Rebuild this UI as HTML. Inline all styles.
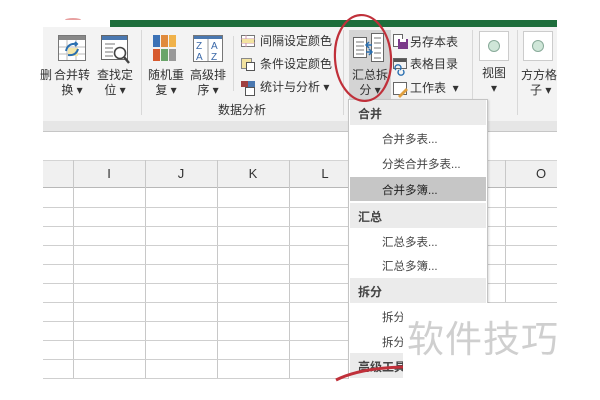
<!DOCTYPE html>
<html><head><meta charset="utf-8"><style>
*{margin:0;padding:0;box-sizing:border-box}
body{width:600px;height:400px;background:#fff;position:relative;overflow:hidden;font-family:"Liberation Sans","Noto Sans CJK SC",sans-serif;color:#333}
.a{position:absolute}
.t{position:absolute;font-size:12px;line-height:14px;white-space:nowrap;color:#333}
.c{text-align:center}
.vl{position:absolute;width:1px;background:#c8c8c8}
.hl{position:absolute;height:1px;background:#cfcfcf}
.mi{position:absolute;left:382px;font-size:11.5px;color:#444}
.mh{position:absolute;left:350px;width:136px;height:25px;background:#ebebeb;font-size:12px;font-weight:bold;color:#444;padding:5px 0 0 8px}
</style></head><body>
<div class="a" style="left:43px;top:20px;width:514px;height:101px;background:#f3f3f3"></div>
<div class="a" style="left:43px;top:20px;width:67px;height:7px;background:#fff"></div>
<div class="a" style="left:110px;top:20px;width:447px;height:7px;background:#1e6e3c"></div>
<div class="a" style="left:65px;top:18px;width:16px;height:4px;border-top:2px solid #e8a0a0;border-radius:50%"></div>
<div class="a" style="left:43px;top:121px;width:514px;height:11px;background:#e6e6e6;border-bottom:1px solid #c6c6c6"></div>
<div class="a" style="left:43px;top:132px;width:514px;height:28px;background:#fff"></div>
<div class="a" style="left:43px;top:160px;width:514px;height:28px;background:#f0f0f0;border-top:1px solid #d4d4d4;border-bottom:1px solid #b8b8b8"></div>
<div class="t c" style="left:73px;top:167px;width:72px;font-size:13px">I</div>
<div class="t c" style="left:145px;top:167px;width:72px;font-size:13px">J</div>
<div class="t c" style="left:217px;top:167px;width:72px;font-size:13px">K</div>
<div class="t c" style="left:289px;top:167px;width:72px;font-size:13px">L</div>
<div class="t c" style="left:505px;top:167px;width:72px;font-size:13px">O</div>
<div class="vl" style="left:73px;top:160px;height:219px"></div>
<div class="vl" style="left:145px;top:160px;height:219px"></div>
<div class="vl" style="left:217px;top:160px;height:219px"></div>
<div class="vl" style="left:289px;top:160px;height:219px"></div>
<div class="vl" style="left:361px;top:160px;height:219px"></div>
<div class="vl" style="left:433px;top:160px;height:219px"></div>
<div class="vl" style="left:505px;top:160px;height:219px"></div>
<div class="hl" style="left:43px;top:207px;width:514px"></div>
<div class="hl" style="left:43px;top:226px;width:514px"></div>
<div class="hl" style="left:43px;top:245px;width:514px"></div>
<div class="hl" style="left:43px;top:264px;width:514px"></div>
<div class="hl" style="left:43px;top:283px;width:514px"></div>
<div class="hl" style="left:43px;top:302px;width:514px"></div>
<div class="hl" style="left:43px;top:321px;width:514px"></div>
<div class="hl" style="left:43px;top:340px;width:514px"></div>
<div class="hl" style="left:43px;top:359px;width:514px"></div>
<div class="hl" style="left:43px;top:378px;width:514px"></div>
<div class="a" style="left:0;top:379px;width:600px;height:21px;background:#fff"></div>

<div class="t" style="left:40px;top:68px">删</div>
<svg class="a" style="left:58px;top:35px" width="28" height="26"><rect x="0.5" y="0.5" width="27" height="25" fill="#fff" stroke="#777"/><rect x="1" y="1" width="26" height="4" fill="#888"/><path d="M1 12H27M1 19H27M9 5V25M18 5V25" stroke="#bbb"/><rect x="10" y="13" width="10" height="8" fill="#f3e6a8"/><path d="M8 16q2-8 10-7M17 7l2 2-2 2M20 14q-2 7-10 6" stroke="#2a6fb0" stroke-width="2" fill="none"/></svg>
<div class="t c" style="left:52px;top:68px;width:40px">合并转</div>
<div class="t c" style="left:52px;top:83px;width:40px">换 ▾</div>
<svg class="a" style="left:101px;top:35px" width="30" height="30"><rect x="0.5" y="0.5" width="26" height="24" fill="#fff" stroke="#666"/><rect x="1" y="1" width="25" height="4" fill="#4a78b0"/><path d="M4 9H14M4 13H12M4 17H12M4 21H12" stroke="#777"/><circle cx="19" cy="18" r="5.5" fill="#fff" stroke="#444" stroke-width="1.6"/><path d="M23 22l5 6" stroke="#444" stroke-width="2.4"/></svg>
<div class="t c" style="left:95px;top:68px;width:40px">查找定</div>
<div class="t c" style="left:95px;top:83px;width:40px">位 ▾</div>
<div class="vl" style="left:141px;top:30px;height:85px;background:#d8d8d8"></div>
<svg class="a" style="left:153px;top:35px" width="25" height="27"><rect x="0" y="0" width="7" height="12" fill="#3c72b6"/><rect x="8" y="0" width="7" height="12" fill="#e08a3c"/><rect x="16" y="0" width="7" height="12" fill="#f0b24a"/><rect x="0" y="14" width="7" height="12" fill="#d75a2e"/><rect x="8" y="14" width="7" height="12" fill="#6aa56a"/><rect x="16" y="14" width="7" height="12" fill="#999"/></svg>
<div class="t c" style="left:146px;top:68px;width:40px">随机重</div>
<div class="t c" style="left:146px;top:83px;width:40px">复 ▾</div>
<svg class="a" style="left:193px;top:35px" width="30" height="27"><rect x="0.5" y="0.5" width="29" height="26" fill="#fff" stroke="#777"/><rect x="1" y="1" width="28" height="3" fill="#4a78b0"/><path d="M15 4V26" stroke="#999"/><text x="3" y="14" font-size="10" fill="#3a68a8" font-family="Liberation Sans">Z</text><text x="3" y="25" font-size="10" fill="#3a68a8" font-family="Liberation Sans">A</text><text x="18" y="14" font-size="10" fill="#3a68a8" font-family="Liberation Sans">A</text><text x="18" y="25" font-size="10" fill="#3a68a8" font-family="Liberation Sans">Z</text></svg>
<div class="t c" style="left:188px;top:68px;width:40px">高级排</div>
<div class="t c" style="left:188px;top:83px;width:40px">序 ▾</div>
<div class="vl" style="left:233px;top:36px;height:55px;background:#d8d8d8"></div>
<svg class="a" style="left:241px;top:35px" width="14" height="62"><rect x="0.5" y="0.5" width="13" height="11" fill="#fff" stroke="#777"/><path d="M0 4H14M0 8H14M5 0V12" stroke="#c9a" /><rect x="1" y="4" width="12" height="4" fill="#f3e3a0"/><rect x="0.5" y="23.5" width="10" height="10" fill="#f3e3a0" stroke="#888"/><rect x="5.5" y="27.5" width="8" height="8" fill="#fff" stroke="#555"/><rect x="0" y="46" width="7" height="6" fill="#a04040"/><rect x="7" y="46" width="7" height="6" fill="#4a78b0"/><rect x="4.5" y="52.5" width="9" height="8" fill="#fff" stroke="#555"/></svg>
<div class="t" style="left:260px;top:34px">间隔设定颜色</div>
<div class="t" style="left:260px;top:57px">条件设定颜色</div>
<div class="t" style="left:260px;top:80px">统计与分析 ▾</div>
<div class="t" style="left:218px;top:103px">数据分析</div>
<div class="vl" style="left:343px;top:30px;height:85px;background:#d8d8d8"></div>
<div class="a" style="left:349px;top:30px;width:42px;height:70px;background:#d4d4d4"></div>
<svg class="a" style="left:353px;top:33px" width="32" height="30"><rect x="0.5" y="4.5" width="13" height="20" fill="#fff" stroke="#666"/><path d="M3 9H11M3 13H11M3 17H11M3 21H11" stroke="#777"/><rect x="18.5" y="0.5" width="12" height="28" fill="#fff" stroke="#666"/><path d="M21 5H28M21 10H28M21 15H28M21 20H28M21 25H28" stroke="#777"/><path d="M13 12H19M16 9l-3 3 3 3M13 19H19M16 16l3 3-3 3" stroke="#2a6fb0" stroke-width="1.5" fill="none"/></svg>
<div class="t c" style="left:349px;top:68px;width:42px">汇总拆</div>
<div class="t c" style="left:349px;top:83px;width:42px">分 ▾</div>
<svg class="a" style="left:393px;top:34px" width="16" height="64"><rect x="0.5" y="0.5" width="9" height="12" fill="#fff" stroke="#666"/><rect x="5" y="5" width="10" height="10" fill="#7b3a8a"/><rect x="7" y="5" width="6" height="3" fill="#fff"/><rect x="0" y="24" width="14" height="4" fill="#555"/><rect x="0.5" y="24.5" width="13" height="10" fill="none" stroke="#666"/><path d="M3 36a3 3 0 1 1 4 0M6 36a3 3 0 1 0 4 0" stroke="#2a6fb0" fill="none" stroke-width="1.4"/><rect x="0.5" y="48.5" width="13" height="12" fill="#fff" stroke="#666"/><path d="M5 62l8-8 2 2-8 8z" fill="#e0a040"/></svg>
<div class="t" style="left:410px;top:35px">另存本表</div>
<div class="t" style="left:410px;top:57px">表格目录</div>
<div class="t" style="left:410px;top:81px">工作表 &nbsp;▾</div>
<div class="vl" style="left:472px;top:30px;height:85px;background:#d8d8d8"></div>
<div class="a" style="left:479px;top:31px;width:30px;height:30px;background:#fff;border:1px solid #ccc"></div>
<div class="a" style="left:488px;top:40px;width:12px;height:12px;border-radius:50%;background:#cfe6d8;border:1px solid #8a9"></div>
<div class="t c" style="left:474px;top:66px;width:40px">视图</div>
<div class="t c" style="left:474px;top:81px;width:40px">▾</div>
<div class="vl" style="left:517px;top:30px;height:85px;background:#d8d8d8"></div>
<div class="a" style="left:523px;top:31px;width:30px;height:30px;background:#fff;border:1px solid #ccc"></div>
<div class="a" style="left:532px;top:40px;width:12px;height:12px;border-radius:50%;background:#cfe6d8;border:1px solid #8a9"></div>
<div class="t" style="left:521px;top:68px">方方格</div>
<div class="t" style="left:530px;top:83px">子 ▾</div>

<div class="a" style="left:348px;top:99px;width:140px;height:290px;background:#fff;border:1px solid #c4c4c4;box-shadow:1px 1px 2px rgba(0,0,0,.15)"></div>
<div class="mh" style="top:100px">合并</div>
<div class="mi" style="top:131px">合并多表...</div>
<div class="mi" style="top:156px">分类合并多表...</div>
<div class="a" style="left:350px;top:177px;width:136px;height:24px;background:#c6c6c6"></div>
<div class="mi" style="top:182px;color:#222">合并多簿...</div>
<div class="mh" style="top:203px">汇总</div>
<div class="mi" style="top:234px">汇总多表...</div>
<div class="mi" style="top:258px">汇总多簿...</div>
<div class="mh" style="top:278px">拆分</div>
<div class="mi" style="top:309px">拆分</div>
<div class="mi" style="top:334px">拆分</div>
<div class="mh" style="top:353px">高级工具</div>
<div class="a" style="left:403px;top:303px;width:197px;height:97px;background:#fff"></div>
<div class="t" style="left:407px;top:318px;font-size:37px;line-height:44px;color:#cfcfcf;letter-spacing:1px">软件技巧</div>
<div class="a" style="left:0;top:379px;width:600px;height:21px;background:#fff"></div>
<svg class="a" style="left:0;top:0" width="600" height="400"><ellipse cx="363" cy="58" rx="28" ry="43" fill="none" stroke="#c0303a" stroke-width="2.2" transform="rotate(-4 363 58)"/><path d="M336 380Q360 368 403 367" stroke="#c0303a" stroke-width="3" fill="none"/></svg>
</body></html>
